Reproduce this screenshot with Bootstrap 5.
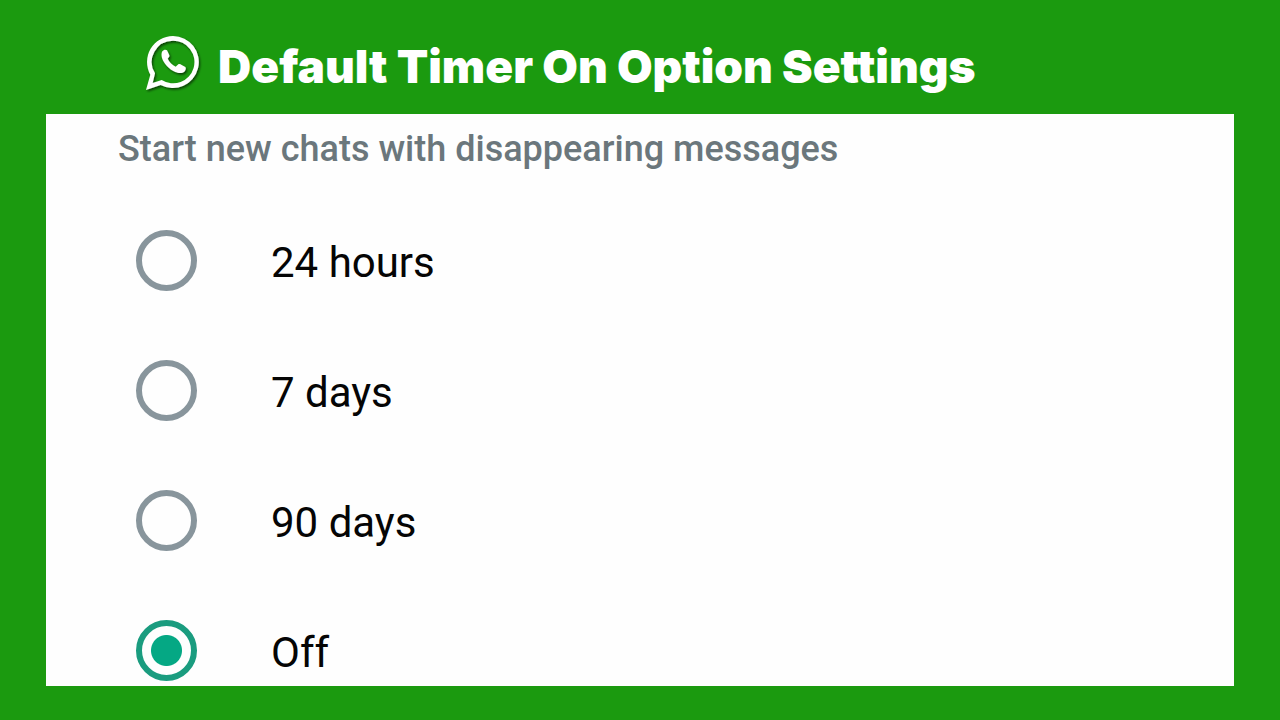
<!DOCTYPE html>
<html lang="en">
<head>
<meta charset="utf-8">
<meta name="viewport" content="width=device-width, initial-scale=1">
<title>Default Timer On Option Settings</title>
<link href="https://cdn.jsdelivr.net/npm/bootstrap@5.3.0/dist/css/bootstrap.min.css" rel="stylesheet">
<style>
  body { background: #1b9a0f; font-family: Roboto, "Liberation Sans", sans-serif; }
  .page { padding: 0 46px 34px; }
  .banner { min-height: 114px; padding: 12px 0 0 98px; gap: 14px; }
  .banner svg { width: 60px; height: 60px; flex: none; }
  .banner h1 { font: 900 46px/56px Inter, "Liberation Sans", sans-serif; color: #fff; padding-top: 6px; }
  .panel { background: #fefefe; padding: 8px 72px 3px; }
  .panel legend { font-size: 36px; line-height: 54px; font-weight: 500; color: #6b777c; }
  .choices { gap: 64px; padding: 51px 0 0 18px; }
  .choice { gap: 74px; }
  .choice .form-check-input { width: 61px; height: 61px; border: 6px solid #88959c; background: none; flex: none; }
  .choice .form-check-input:checked { border-color: #1a9c7f; background: radial-gradient(circle, #05a884 15px, transparent 16px); }
  .choice label { font-size: 42px; line-height: 60px; color: #050505; padding-top: 6px; }
</style>
</head>
<body>
<div class="page">
  <header class="banner d-flex align-items-center">
    <svg viewBox="42 36 180 180" role="img" aria-label="WhatsApp">
      <defs><filter id="shade" x="-10%" y="-10%" width="130%" height="130%"><feDropShadow dx="4" dy="5" stdDeviation="3" flood-color="#000" flood-opacity=".6"/></filter></defs>
      <g filter="url(#shade)" fill="#fff">
        <path fill-rule="evenodd" d="M129 45A78 78 0 1 1 92 192L48 207L61 161A78 78 0 0 1 129 45ZM129 59A64 64 0 0 0 75 157L68 186L95 177A64 64 0 1 0 129 59Z"/>
        <path d="M97 91C101 85 108 85 111 88L118 103C119 107 116 110 113 113C118 124 127 132 137 137L145 130C148 128 152 130 155 132L166 138C169 141 167 148 163 152C156 158 144 156 136 153C117 145 101 127 96 111C94 103 94 96 97 91Z"/>
      </g>
    </svg>
    <h1 class="m-0">Default Timer On Option Settings</h1>
  </header>
  <main class="panel">
    <form>
      <fieldset>
        <legend class="m-0">Start new chats with disappearing messages</legend>
        <div class="choices d-flex flex-column">
          <div class="choice d-flex align-items-center"><input class="form-check-input m-0" type="radio" name="timer" id="t24"><label for="t24">24 hours</label></div>
          <div class="choice d-flex align-items-center"><input class="form-check-input m-0" type="radio" name="timer" id="t7"><label for="t7">7 days</label></div>
          <div class="choice d-flex align-items-center"><input class="form-check-input m-0" type="radio" name="timer" id="t90"><label for="t90">90 days</label></div>
          <div class="choice d-flex align-items-center"><input class="form-check-input m-0" type="radio" name="timer" id="toff" checked><label for="toff">Off</label></div>
        </div>
      </fieldset>
    </form>
  </main>
</div>
<script src="https://cdn.jsdelivr.net/npm/bootstrap@5.3.0/dist/js/bootstrap.bundle.min.js"></script>
</body>
</html>
